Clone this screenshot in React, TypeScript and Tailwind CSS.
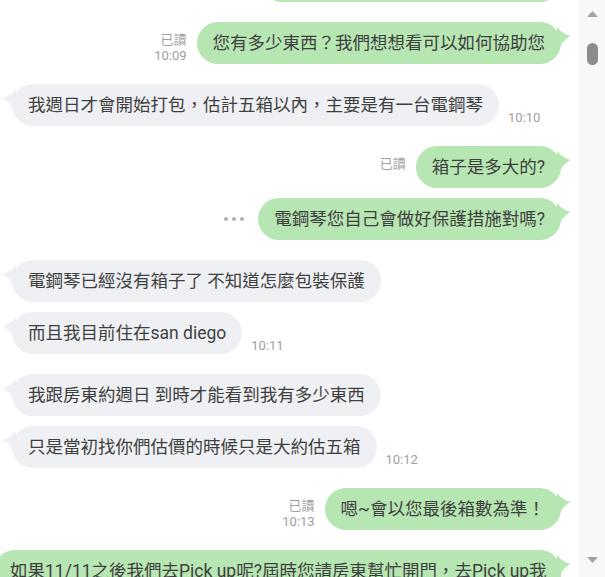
type Msg = {
  side: 'in' | 'out';
  text: React.ReactNode;
  first?: boolean;
  read?: boolean;
  time?: string;
  dots?: boolean;
  width?: string;
};

const msgs: Msg[] = [
  { side: 'out', text: '好的，請問您大約有幾箱呢？', width: 'w-[300px]' },
  { side: 'out', text: '您有多少東西？我們想想看可以如何協助您', first: true, read: true, time: '10:09' },
  { side: 'in', text: '我週日才會開始打包，估計五箱以內，主要是有一台電鋼琴', first: true, time: '10:10' },
  { side: 'out', text: '箱子是多大的?', first: true, read: true },
  { side: 'out', text: '電鋼琴您自己會做好保護措施對嗎?', dots: true },
  { side: 'in', text: '電鋼琴已經沒有箱子了 不知道怎麼包裝保護', first: true },
  { side: 'in', text: '而且我目前住在san diego', time: '10:11' },
  { side: 'in', text: '我跟房東約週日 到時才能看到我有多少東西', first: true },
  { side: 'in', text: '只是當初找你們估價的時候只是大約估五箱', time: '10:12' },
  { side: 'out', text: '嗯~會以您最後箱數為準！', first: true, read: true, time: '10:13' },
  {
    side: 'out',
    first: true,
    width: 'w-[567px]',
    text: (
      <>
        <span className="block whitespace-nowrap">如果11/11之後我們去Pick up呢?屆時您請房東幫忙開門，去Pick up我</span>
        <span className="block">們的東西就可以了</span>
      </>
    ),
  },
];

function Tail({ side, color }: { side: 'in' | 'out'; color: string }) {
  return (
    <svg
      width="14"
      height="22"
      viewBox="0 0 14 22"
      className={side === 'out' ? 'absolute right-[-10px] top-[5px]' : 'absolute left-[-10px] top-[5px] -scale-x-100'}
    >
      <path d="M0 0 C4 5 9 8 14 9 C9 11 5 15 2 22 L0 22 Z" fill={color} />
    </svg>
  );
}

function Bubble({ m }: { m: Msg }) {
  const out = m.side === 'out';
  return (
    <div
      className={`relative shrink-0 rounded-[21px] px-4 py-[10px] text-[17.5px] leading-[22px] text-[#404040] ${
        out ? 'bg-[#b6e6b2]' : 'bg-[#eff0f3]'
      } ${m.width ?? ''}`}
    >
      <Tail side={m.side} color={out ? '#b6e6b2' : '#eff0f3'} />
      <div className="relative whitespace-nowrap">{m.text}</div>
    </div>
  );
}

function Row({ m }: { m: Msg }) {
  const gap = m.first ? 'mt-[20px]' : 'mt-[10px]';
  if (m.side === 'in') {
    return (
      <div className={`flex items-end ${gap}`}>
        <Bubble m={m} />
        {m.time && <span className="ml-[9px] text-[13px] leading-[16px] text-[#a0a0a0]">{m.time}</span>}
      </div>
    );
  }
  return (
    <div className={`flex justify-end ${m.dots ? 'items-center' : 'items-end'} ${gap}`}>
      {m.dots && (
        <div className="mr-[14px] flex gap-[4px]">
          <span className="h-[4px] w-[4px] rounded-full bg-[#b0b0b0]" />
          <span className="h-[4px] w-[4px] rounded-full bg-[#b0b0b0]" />
          <span className="h-[4px] w-[4px] rounded-full bg-[#b0b0b0]" />
        </div>
      )}
      {(m.read || m.time) && (
        <div className="mr-[10px] flex flex-col items-end text-[13px] leading-[16px] text-[#a0a0a0]">
          {m.read && <span>已讀</span>}
          <span>{m.time ?? '\u00a0'}</span>
        </div>
      )}
      <Bubble m={m} />
    </div>
  );
}

function Scrollbar() {
  return (
    <div className="flex h-full w-[26px] shrink-0 flex-col items-center bg-[#f8f8f8] pb-[14px] pt-[11px]">
      <svg width="11" height="6" viewBox="0 0 11 6">
        <path d="M5.5 0 L11 6 L0 6 Z" fill="#a3a3a3" />
      </svg>
      <div className="mt-[26px] h-[22px] w-[11px] rounded-full bg-[#8c8c8c]" />
      <div className="flex-1" />
      <svg width="11" height="6" viewBox="0 0 11 6">
        <path d="M0 0 L11 0 L5.5 6 Z" fill="#a3a3a3" />
      </svg>
    </div>
  );
}

export default function App() {
  return (
    <div className="flex h-[577px] w-[605px] overflow-hidden bg-white font-['Roboto','Noto_Sans_CJK_TC',sans-serif]">
      <div className="min-w-0 flex-1 overflow-hidden pl-[12px] pr-[18px]">
        <div className="-mt-[50px] flex flex-col">
          {msgs.map((m, i) => (
            <Row key={i} m={m} />
          ))}
        </div>
      </div>
      <Scrollbar />
    </div>
  );
}
